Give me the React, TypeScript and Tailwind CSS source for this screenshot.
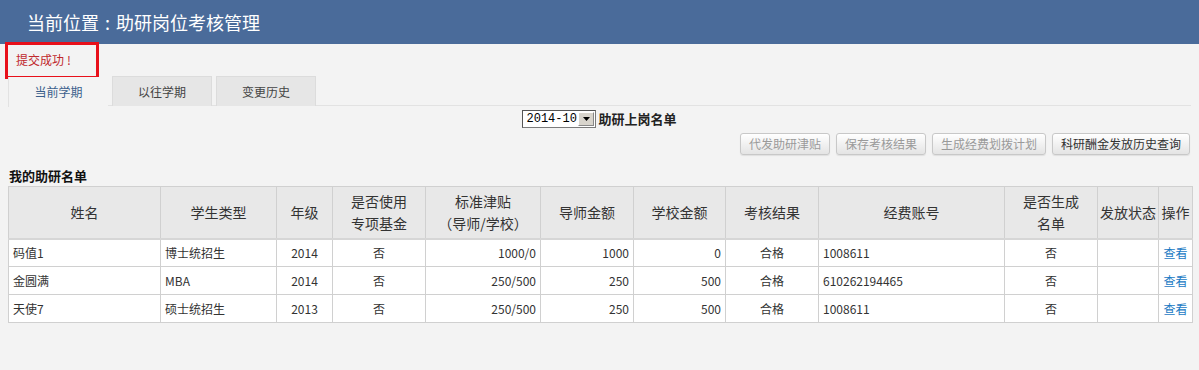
import React from "react";

const FONT = '"Noto Sans CJK SC", "Noto Sans", sans-serif';

const cols = [152, 116, 56, 93, 115, 93, 92, 93, 186, 93, 61, 34];

type Row = {
  name: string;
  type: string;
  grade: string;
  fund: string;
  std: string;
  tutor: string;
  school: string;
  result: string;
  account: string;
  gen: string;
};

const rows: Row[] = [
  { name: "码值1", type: "博士统招生", grade: "2014", fund: "否", std: "1000/0", tutor: "1000", school: "0", result: "合格", account: "1008611", gen: "否" },
  { name: "金圆满", type: "MBA", grade: "2014", fund: "否", std: "250/500", tutor: "250", school: "500", result: "合格", account: "610262194465", gen: "否" },
  { name: "天使7", type: "硕士统招生", grade: "2013", fund: "否", std: "250/500", tutor: "250", school: "500", result: "合格", account: "1008611", gen: "否" },
];

function Btn({ children, dark }: { children: React.ReactNode; dark?: boolean }) {
  return (
    <button
      className={
        "h-[22px] px-[8px] rounded-[3px] border border-[#c8c8c8] bg-gradient-to-b from-[#ffffff] to-[#e4e4e4] text-[12px] leading-[20px] shadow-[0_1px_1px_rgba(0,0,0,0.08)] " +
        (dark ? "text-[#333]" : "text-[#9a9a9a]")
      }
    >
      {children}
    </button>
  );
}

export default function App() {
  return (
    <div className="w-[1199px] h-[370px] bg-[#f3f3f3] overflow-hidden text-[#333]" style={{ fontFamily: FONT }}>
      <div className="h-[44px] bg-[#4a6b9a] pl-[27px] text-white text-[18px] leading-[44px]">
        当前位置<span className="px-[6px]">:</span>助研岗位考核管理
      </div>

      <div className="relative h-[32px] flex items-center pl-[16px] text-[12px] text-[#c0282d]">
        提交成功<span className="pl-[3px]">!</span>
        <div className="absolute left-[5px] top-[-2px] w-[94px] h-[37px] border-[3px] border-[#e8101a]" />
      </div>

      <div className="mx-[8px] h-[30px] flex gap-[4px] border-b border-[#e2e2e2]">
        <div className="w-[100px] h-[30px] flex items-center justify-center text-[12px] text-[#3b5f8c] border-l border-[#e2e2e2] bg-[#f3f3f3] relative top-[1px]">
          当前学期
        </div>
        <div className="w-[100px] h-[30px] flex items-center justify-center text-[12px] text-[#444] bg-[#e6e6e6] border border-[#dcdcdc] border-b-0">
          以往学期
        </div>
        <div className="w-[100px] h-[30px] flex items-center justify-center text-[12px] text-[#444] bg-[#e6e6e6] border border-[#dcdcdc] border-b-0">
          变更历史
        </div>
      </div>

      <div className="mt-[4px] flex justify-center items-center h-[18px]">
        <div className="w-[74px] h-[18px] flex items-stretch bg-white border border-[#7a7a7a] border-t-[#555] border-l-[#555]">
          <span className="flex-1 pl-[3px] text-[12px] leading-[16px] text-black whitespace-nowrap" style={{ fontFamily: '"Liberation Mono", monospace' }}>
            2014-10
          </span>
          <span className="w-[16px] m-[1px] bg-[#d8d4cc] border border-[#fff] border-r-[#888] border-b-[#888] flex items-center justify-center">
            <svg width="7" height="4" viewBox="0 0 7 4">
              <path d="M0 0h7L3.5 4z" fill="#000" />
            </svg>
          </span>
        </div>
        <span className="ml-[2px] text-[13px] font-bold text-[#222]">助研上岗名单</span>
      </div>

      <div className="mt-[5px] mr-[9px] flex justify-end gap-[6px]">
        <Btn>代发助研津贴</Btn>
        <Btn>保存考核结果</Btn>
        <Btn>生成经费划拨计划</Btn>
        <Btn dark>科研酬金发放历史查询</Btn>
      </div>

      <div className="mt-[11px] pl-[9px] text-[13px] font-bold text-[#111] leading-[20px]">我的助研名单</div>

      <table className="ml-[8px] border-collapse table-fixed text-[12px]" style={{ width: 1184 }}>
        <colgroup>
          {cols.map((w, i) => (
            <col key={i} style={{ width: w }} />
          ))}
        </colgroup>
        <thead>
          <tr className="h-[52px] bg-[#e8e8e8] text-[14px] text-[#333] border-b-2 border-b-[#d6d6d6]">
            {["姓名", "学生类型", "年级"].map((h) => (
              <th key={h} className="border border-[#d0d0d0] font-normal">{h}</th>
            ))}
            <th className="border border-[#d0d0d0] font-normal leading-[22px]">是否使用<br />专项基金</th>
            <th className="border border-[#d0d0d0] font-normal leading-[22px]">标准津贴<br />（导师/学校）</th>
            {["导师金额", "学校金额", "考核结果", "经费账号"].map((h) => (
              <th key={h} className="border border-[#d0d0d0] font-normal">{h}</th>
            ))}
            <th className="border border-[#d0d0d0] font-normal leading-[22px]">是否生成<br />名单</th>
            <th className="border border-[#d0d0d0] font-normal whitespace-nowrap">发放状态</th>
            <th className="border border-[#d0d0d0] font-normal whitespace-nowrap">操作</th>
          </tr>
        </thead>
        <tbody>
          {rows.map((r, i) => (
            <tr key={i} className="h-[28px] bg-white text-[#333]">
              <td className="border border-[#d0d0d0] pl-[4px]">{r.name}</td>
              <td className="border border-[#d0d0d0] pl-[4px]">{r.type}</td>
              <td className="border border-[#d0d0d0] text-center">{r.grade}</td>
              <td className="border border-[#d0d0d0] text-center">{r.fund}</td>
              <td className="border border-[#d0d0d0] text-right pr-[4px]">{r.std}</td>
              <td className="border border-[#d0d0d0] text-right pr-[4px]">{r.tutor}</td>
              <td className="border border-[#d0d0d0] text-right pr-[4px]">{r.school}</td>
              <td className="border border-[#d0d0d0] text-center">{r.result}</td>
              <td className="border border-[#d0d0d0] pl-[4px]">{r.account}</td>
              <td className="border border-[#d0d0d0] text-center">{r.gen}</td>
              <td className="border border-[#d0d0d0]"></td>
              <td className="border border-[#d0d0d0] text-center text-[#1a7ac4]">查看</td>
            </tr>
          ))}
        </tbody>
      </table>
    </div>
  );
}
